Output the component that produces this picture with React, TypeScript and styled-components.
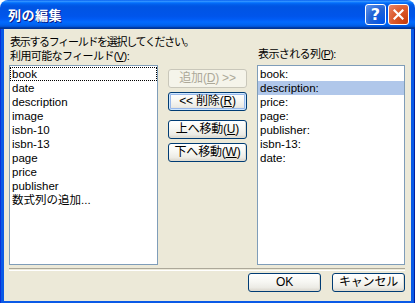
import React from 'react'
import styled, { createGlobalStyle } from 'styled-components'

const GlobalStyle = createGlobalStyle`
  html, body {
    margin: 0;
    padding: 0;
    background: #ffffff;
  }
`

const UI_FONT = `"Liberation Sans", "Noto Sans CJK JP", sans-serif`

const Window = styled.div`
  width: 415px;
  height: 303px;
  display: flex;
  flex-direction: column;
  border-radius: 8px 8px 0 0;
  overflow: hidden;
`

const TitleBar = styled.div`
  height: 29px;
  flex: none;
  display: flex;
  align-items: center;
  padding: 0 6px 0 8px;
  background: linear-gradient(180deg, #0058ee 0%, #3593ff 4%, #288eff 6%, #127dff 8%, #036ffc 10%, #0262ee 14%, #0057e5 20%, #0054e3 24%, #0055eb 56%, #005bf5 66%, #026afe 76%, #0062ef 86%, #0052d6 92%, #0040ab 94%, #003092 100%);
`

const Title = styled.div`
  flex: 1;
  color: #ffffff;
  font: bold 13px "Noto Sans CJK JP", sans-serif;
  text-shadow: 1px 1px 0 #0a1883;
  letter-spacing: 0.5px;
`

const CaptionButton = styled.div<{ $tone: 'help' | 'close' }>`
  width: 21px;
  height: 21px;
  box-sizing: border-box;
  margin-left: 2px;
  border: 1px solid #ffffff;
  border-radius: 3px;
  display: flex;
  align-items: center;
  justify-content: center;
  color: #ffffff;
  font: bold 16px "DejaVu Sans", sans-serif;
  background: ${p => p.$tone === 'close'
    ? 'radial-gradient(circle at 90% 90%, #c83d0c 0%, #dc5a2c 55%, #e9866a 100%)'
    : 'radial-gradient(circle at 90% 90%, #0054e9 0%, #2263d5 55%, #6696eb 100%)'};
`

const Frame = styled.div`
  flex: 1;
  display: flex;
  padding: 0 4px 4px;
  background: #0a5ae6;
  box-shadow: inset 1px 0 0 #0831d9, inset -1px 0 0 #001ea0, inset 0 -1px 0 #001ea0;
`

const Client = styled.div`
  flex: 1;
  display: flex;
  flex-direction: column;
  background: #ece9d8;
  padding: 6px 6px 9px 5px;
  font: 11px ${UI_FONT};
  color: #000000;
`

const Intro = styled.div`
  height: 14px;
  line-height: 14px;
  padding-left: 1px;
  letter-spacing: -1.3px;
`

const Columns = styled.div`
  display: flex;
  gap: 10px;
`

const FieldColumn = styled.div<{ $width: number }>`
  width: ${p => p.$width}px;
  display: flex;
  flex-direction: column;
`

const Label = styled.div<{ $lift?: number }>`
  height: 14px;
  line-height: 14px;
  margin-bottom: 2px;
  padding-left: 1px;
  letter-spacing: -0.6px;
  white-space: nowrap;
  transform: translateY(-${p => p.$lift ?? 0}px);
`

const ListBox = styled.div`
  height: 200px;
  box-sizing: border-box;
  border: 1px solid #7f9db9;
  background: #ffffff;
  padding-top: 1px;
`

const ListItem = styled.div<{ $selected?: boolean; $focused?: boolean }>`
  height: 14px;
  line-height: 14px;
  box-sizing: border-box;
  padding-left: 2px;
  font-size: 11.5px;
  white-space: nowrap;
  background: ${p => (p.$selected ? '#b0c7ea' : 'transparent')};
  outline: ${p => (p.$focused ? '1px dotted #000000' : 'none')};
  outline-offset: -1px;
`

const ActionColumn = styled.div`
  width: 79px;
  display: flex;
  flex-direction: column;
  padding-top: 20px;
`

const Button = styled.button<{ $default?: boolean; $gap?: number; $width?: number }>`
  width: ${p => (p.$width ? `${p.$width}px` : '100%')};
  height: 19px;
  margin-top: ${p => p.$gap ?? 0}px;
  box-sizing: border-box;
  padding: 0;
  border: 1px solid #003c74;
  border-radius: 3px;
  background: linear-gradient(180deg, #ffffff 0%, #f7f7f3 45%, #ecebe5 80%, #d8d4ca 100%);
  box-shadow: ${p => (p.$default
    ? 'inset 0 0 0 1px #cee7ff, inset 0 0 0 2px #98b8ea'
    : 'inset -1px -1px 0 #e0ddd3')};
  font: 12px ${UI_FONT};
  line-height: 15px;
  color: #000000;
  letter-spacing: -0.2px;
  white-space: nowrap;

  &:disabled {
    border-color: #c9c7ba;
    color: #aca899;
    background: #f5f4ea;
    box-shadow: none;
  }
`

const Separator = styled.div`
  height: 1px;
  margin-top: 3px;
  border-top: 1px solid #aca899;
  border-bottom: 1px solid #ffffff;
`

const Footer = styled.div`
  display: flex;
  justify-content: flex-end;
  gap: 11px;
  margin-top: 2px;
`

const available = ['book', 'date', 'description', 'image', 'isbn-10', 'isbn-13', 'page', 'price', 'publisher', '数式列の追加...']
const shown = ['book:', 'description:', 'price:', 'page:', 'publisher:', 'isbn-13:', 'date:']

export default function App() {
  return (
    <>
      <GlobalStyle />
      <Window>
        <TitleBar>
          <Title>列の編集</Title>
          <CaptionButton $tone="help">?</CaptionButton>
          <CaptionButton $tone="close">
            <svg width="11" height="11" viewBox="0 0 11 11">
              <path d="M1.5 1.5 L9.5 9.5 M9.5 1.5 L1.5 9.5" stroke="#ffffff" strokeWidth="2.2" strokeLinecap="square" />
            </svg>
          </CaptionButton>
        </TitleBar>
        <Frame>
          <Client>
            <Intro>表示するフィールドを選択してください。</Intro>
            <Columns>
              <FieldColumn $width={149}>
                <Label>利用可能なフィールド(<u>V</u>):</Label>
                <ListBox>
                  {available.map((name, i) => (
                    <ListItem key={name} $focused={i === 0}>{name}</ListItem>
                  ))}
                </ListBox>
              </FieldColumn>
              <ActionColumn>
                <Button disabled>追加(<u>D</u>) &gt;&gt;</Button>
                <Button $default $gap={4}>&lt;&lt; 削除(<u>R</u>)</Button>
                <Button $gap={9}>上へ移動(<u>U</u>)</Button>
                <Button $gap={4}>下へ移動(<u>W</u>)</Button>
              </ActionColumn>
              <FieldColumn $width={148}>
                <Label $lift={2}>表示される列(<u>P</u>):</Label>
                <ListBox>
                  {shown.map((name, i) => (
                    <ListItem key={name} $selected={i === 1}>{name}</ListItem>
                  ))}
                </ListBox>
              </FieldColumn>
            </Columns>
            <Separator />
            <Footer>
              <Button $width={73}>OK</Button>
              <Button $width={73}>キャンセル</Button>
            </Footer>
          </Client>
        </Frame>
      </Window>
    </>
  )
}
